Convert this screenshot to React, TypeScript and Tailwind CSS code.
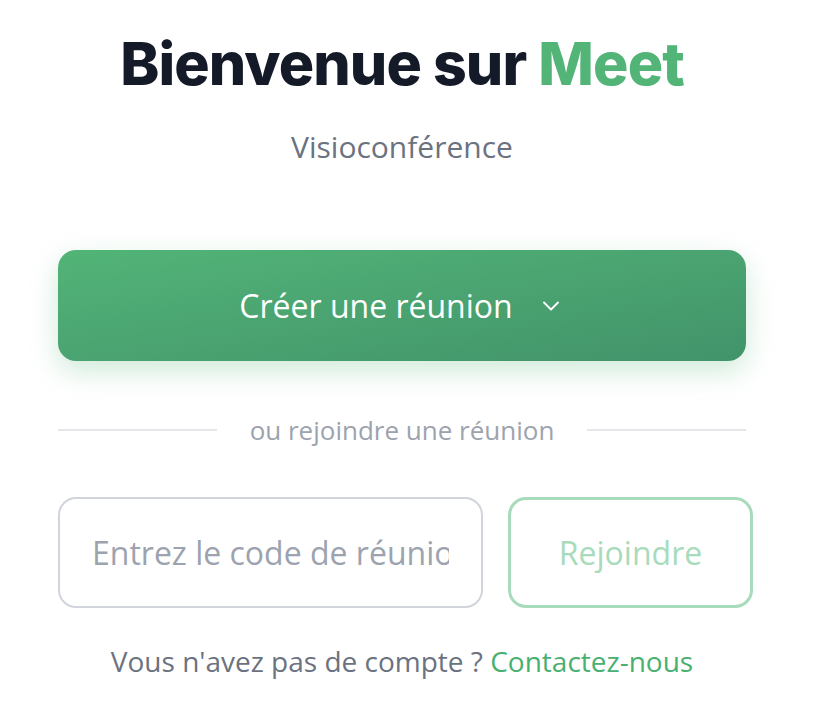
import React, { useState } from "react";

const App = () => {
  const [code, setCode] = useState("");

  return (
    <div className="min-h-[710px] w-[822px] bg-white font-['Open_Sans',sans-serif]">
      <div className="ml-[58px] w-[688px] pt-[28px]">
        {/* Title */}
        <h1 className="text-center font-['Inter',sans-serif] text-[59px] font-extrabold leading-[72px] tracking-[-0.9px] text-[#141a28]">
          Bienvenue sur <span className="text-[#52b477]">Meet</span>
        </h1>
        <p className="mt-[27px] text-center text-[30px] leading-[40px] text-[#6b7280]">Visioconférence</p>

        {/* Create meeting */}
        <button className="mt-[83px] flex h-[111px] w-full items-center justify-center gap-[24px] rounded-[18px] bg-gradient-to-br from-[#52b477] to-[#42936a] text-white shadow-[0_10px_28px_rgba(82,180,119,0.28)]">
          <span className="text-[32px] leading-[42px]">Créer une réunion</span>
          <svg width="28" height="28" viewBox="0 0 24 24" fill="none" stroke="currentColor" strokeWidth="1.6" strokeLinecap="round" strokeLinejoin="round">
            <path d="m6 9 6 6 6-6" />
          </svg>
        </button>

        {/* Divider */}
        <div className="mt-[52px] flex items-center gap-[33px]">
          <div className="h-[2px] flex-1 bg-[#e5e7eb]" />
          <span className="text-[26px] leading-[34px] text-[#9ca3af]">ou rejoindre une réunion</span>
          <div className="h-[2px] flex-1 bg-[#e5e7eb]" />
        </div>

        {/* Join */}
        <div className="mt-[50px] flex w-[695px] gap-[25px]">
          <input
            type="text"
            value={code}
            onChange={(e) => setCode(e.target.value)}
            placeholder="Entrez le code de réunion"
            className="h-[111px] w-[425px] rounded-[18px] border-2 border-[#d1d5db] px-[32px] text-[32px] text-[#374151] placeholder:text-[#9ca3af] focus:outline-none"
          />
          <button
            disabled={!code}
            className="h-[111px] flex-1 rounded-[18px] border-[3px] border-[#a8dbbb] text-[32px] text-[#a8dbbb]"
          >
            Rejoindre
          </button>
        </div>

        {/* Footer */}
        <p className="mt-[35px] text-center text-[28px] leading-[36px] text-[#6b7280]">
          Vous n'avez pas de compte ?{" "}
          <a href="#" className="text-[#48b070]">
            Contactez-nous
          </a>
        </p>
      </div>
    </div>
  );
};

export default App;
